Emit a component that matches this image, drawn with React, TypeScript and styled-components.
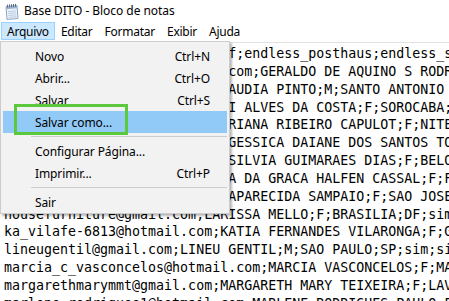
import React from "react";
import styled, { createGlobalStyle } from "styled-components";

const Global = createGlobalStyle`
  html, body { margin: 0; padding: 0; background: #ffffff; overflow: hidden; }
  #root { width: 449px; height: 301px; }
`;

const Window = styled.div`
  position: relative;
  width: 449px;
  height: 301px;
  overflow: hidden;
  display: flex;
  flex-direction: column;
  background: #ffffff;
  font-family: "Noto Sans", "Open Sans", sans-serif;
  font-size: 12px;
  color: #000000;
`;

const TitleBar = styled.div`
  height: 22px;
  display: flex;
  align-items: center;
  padding-left: 3px;
  gap: 4px;
  flex-shrink: 0;
`;

const TitleText = styled.span`
  line-height: 22px;
  letter-spacing: -0.05px;
`;

const MenuBar = styled.div`
  height: 20px;
  display: flex;
  align-items: flex-start;
  flex-shrink: 0;
  padding-left: 1px;
`;

const MenuBarItem = styled.div<{ $active?: boolean }>`
  height: 18px;
  box-sizing: border-box;
  padding: 0 5px;
  display: flex;
  align-items: center;
  border: 1px solid ${(p) => (p.$active ? "#99d1ff" : "transparent")};
  background: ${(p) => (p.$active ? "#cce8ff" : "transparent")};
  letter-spacing: -0.25px;
`;

const Editor = styled.div`
  flex: 1;
  border-top: 1px solid #e3e3e3;
  padding: 2px 0 0 4px;
  font-family: "DejaVu Sans Mono", "Liberation Mono", monospace;
  font-size: 13.3px;
  line-height: 17.85px;
  white-space: pre;
  overflow: hidden;
`;

const Line = styled.div``;

const Dropdown = styled.div`
  position: absolute;
  left: 0;
  top: 41px;
  width: 230px;
  box-sizing: border-box;
  background: #f2f2f2;
  border: 1px solid #cccccc;
  padding: 3px 2px 0 2px;
  box-shadow: 2px 2px 2px rgba(0, 0, 0, 0.28);
  display: flex;
  flex-direction: column;
`;

const MenuRow = styled.div<{ $hover?: boolean }>`
  height: 22px;
  display: flex;
  align-items: center;
  justify-content: space-between;
  padding: 0 17px 0 32px;
  background: ${(p) => (p.$hover ? "#91c9f7" : "transparent")};
  letter-spacing: -0.1px;
`;

const Shortcut = styled.span``;

const Separator = styled.div`
  height: 1px;
  background: #cccccc;
  margin: 3px 0 3px 28px;
`;

const Callout = styled.div`
  position: absolute;
  left: 13px;
  top: 62px;
  width: 114px;
  height: 31px;
  box-sizing: border-box;
  border: 3px solid #5cc83b;
  pointer-events: none;
`;

const NotepadIcon = () => (
  <svg width="17" height="17" viewBox="0 0 17 17">
    <path d="M3 3.5 L14 2.5 L15 15.5 L4 16.5 Z" fill="#eef4fb" stroke="#8ea6c2" strokeWidth="1" />
    <path d="M3 3.5 L14 2.5 L14.3 5.3 L3.3 6.3 Z" fill="#9db6d3" />
    <line x1="5" y1="8.5" x2="13" y2="7.8" stroke="#a9bfd8" strokeWidth="0.8" />
    <line x1="5.2" y1="10.5" x2="13.2" y2="9.8" stroke="#a9bfd8" strokeWidth="0.8" />
    <line x1="5.4" y1="12.5" x2="13.4" y2="11.8" stroke="#a9bfd8" strokeWidth="0.8" />
    <line x1="5.6" y1="14.4" x2="13.6" y2="13.7" stroke="#a9bfd8" strokeWidth="0.8" />
    {[4.5, 6.5, 8.5, 10.5, 12.5].map((x, i) => (
      <path key={i} d={`M${x} ${4.6 - i * 0.18} v-3`} stroke="#5c6f85" strokeWidth="1" />
    ))}
  </svg>
);

const lines = [
  "contato@endlessposthaus.com;f;endless_posthaus;endless_sim;",
  "geraldoaquinorodrig@hotmail.com;GERALDO DE AQUINO S RODRIGUES;M;",
  "claudia.pinto12@gmail.com;CLAUDIA PINTO;M;SANTO ANTONIO DE JESUS",
  "marli_costa1@uol.com.br;MARLI ALVES DA COSTA;F;SOROCABA;SP;sim",
  "adriana.capulot@gmail.com;ADRIANA RIBEIRO CAPULOT;F;NITEROI;RJ",
  "gessicadaiane01@hotmail.com;GESSICA DAIANE DOS SANTOS TORRES;F",
  "silviaguimaraes@hotmail.com;SILVIA GUIMARAES DIAS;F;BELO HORIZONTE",
  "mgracacassal1@ig.com.br;MARIA DA GRACA HALFEN CASSAL;F;FLORIANOPOLIS",
  "cidasampaio@gmail.com;MARIA APARECIDA SAMPAIO;F;SAO JOSE DOS CAMPOS",
  "housefurniture@gmail.com;LARISSA MELLO;F;BRASILIA;DF;sim;sim",
  "ka_vilafe-6813@hotmail.com;KATIA FERNANDES VILARONGA;F;GOIANIA",
  "lineugentil@gmail.com;LINEU GENTIL;M;SAO PAULO;SP;sim;sim",
  "marcia_c_vasconcelos@hotmail.com;MARCIA VASCONCELOS;F;MANAUS",
  "margarethmarymmt@gmail.com;MARGARETH MARY TEIXEIRA;F;LAVRAS",
  "marlene.rodrigues1@hotmail.com;MARLENE RODRIGUES PAULO;F;",
];

type Item = { label: string; shortcut?: string; hover?: boolean } | "sep";

const items: Item[] = [
  { label: "Novo", shortcut: "Ctrl+N" },
  { label: "Abrir...", shortcut: "Ctrl+O" },
  { label: "Salvar", shortcut: "Ctrl+S" },
  { label: "Salvar como...", hover: true },
  "sep",
  { label: "Configurar Página..." },
  { label: "Imprimir...", shortcut: "Ctrl+P" },
  "sep",
  { label: "Sair" },
];

export default function App() {
  return (
    <>
      <Global />
      <Window>
        <TitleBar>
          <NotepadIcon />
          <TitleText>Base DITO - Bloco de notas</TitleText>
        </TitleBar>
        <MenuBar>
          <MenuBarItem $active>Arquivo</MenuBarItem>
          <MenuBarItem>Editar</MenuBarItem>
          <MenuBarItem>Formatar</MenuBarItem>
          <MenuBarItem>Exibir</MenuBarItem>
          <MenuBarItem>Ajuda</MenuBarItem>
        </MenuBar>
        <Editor>
          {lines.map((l, i) => (
            <Line key={i}>{l}</Line>
          ))}
        </Editor>
        <Dropdown>
          {items.map((it, i) =>
            it === "sep" ? (
              <Separator key={i} />
            ) : (
              <MenuRow key={i} $hover={it.hover}>
                <span>{it.label}</span>
                {it.shortcut && <Shortcut>{it.shortcut}</Shortcut>}
              </MenuRow>
            )
          )}
          <Callout />
        </Dropdown>
      </Window>
    </>
  );
}
